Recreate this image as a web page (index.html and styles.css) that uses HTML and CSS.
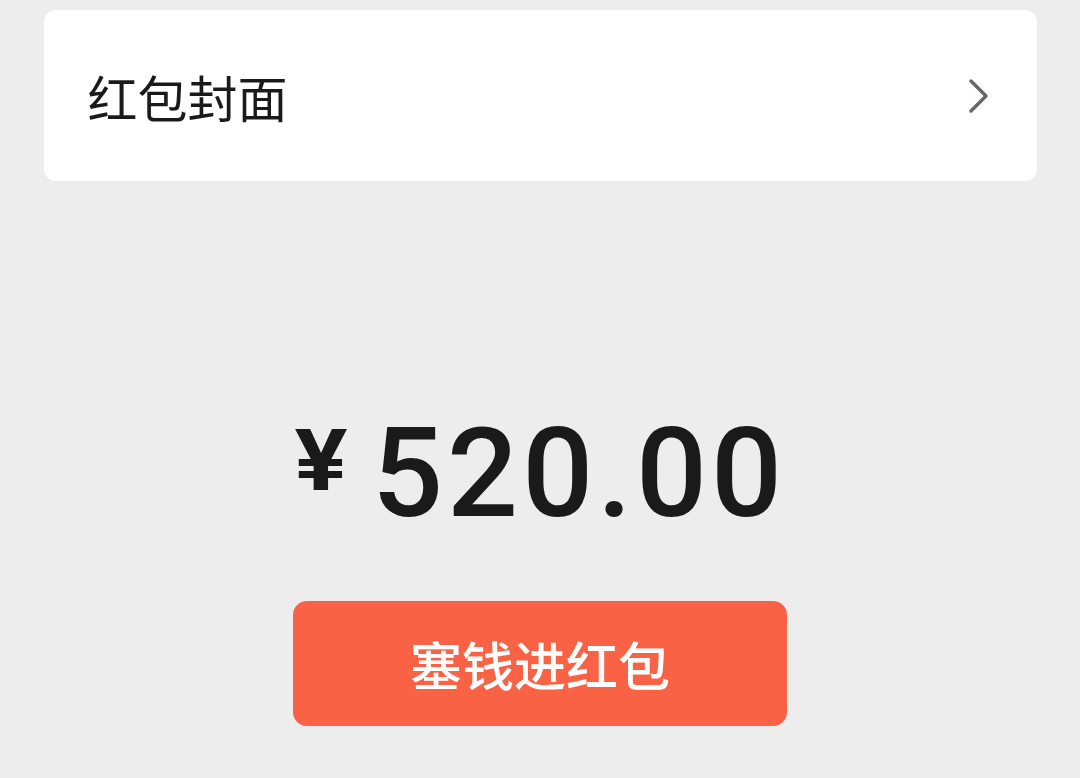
FILE: index.html
```html
<!DOCTYPE html>
<html lang="zh">
<head>
<meta charset="utf-8">
<link rel="stylesheet" href="styles.css">
</head>
<body>
<div class="page">
  <div class="card">
    <span class="card-label">红包封面</span>
    <svg class="chevron" width="24" height="36" viewBox="0 0 24 36"><path d="M4 3 L19 18 L4 33" fill="none" stroke="#666" stroke-width="3.4" stroke-linecap="round" stroke-linejoin="round"/></svg>
  </div>
  <div class="amount">
    <span class="yen">¥</span><span class="num">520.00</span>
  </div>
  <div class="btn">塞钱进红包</div>
</div>
</body>
</html>
```
FILE: styles.css
```css
html, body {
  margin: 0;
  padding: 0;
  background: #ededed;
  height: 100%;
}
.page {
  display: flex;
  flex-direction: column;
  align-items: center;
  padding-top: 10px;
  font-family: "Noto Sans CJK SC", "Noto Sans", sans-serif;
}
.card {
  box-sizing: border-box;
  width: 993px;
  height: 171px;
  background: #fff;
  border-radius: 12px;
  display: flex;
  align-items: center;
  justify-content: space-between;
  padding: 0 46px 0 44px;
}
.card-label {
  font-size: 50px;
  color: #1a1a1a;
}
.chevron {
  display: block;
}
.amount {
  margin-top: 233px;
  display: flex;
  align-items: flex-start;
  height: 120px;
}
.yen {
  font-family: "Roboto", "Liberation Sans", sans-serif;
  font-weight: 700;
  font-size: 86px;
  line-height: 86px;
  margin-top: 4px;
  color: #1a1a1a;
  margin-right: 28px;
  display: inline-block;
  transform: scaleX(1.15);
}
.num {
  font-family: "Roboto", "Liberation Sans", sans-serif;
  font-weight: 500;
  font-size: 125px;
  line-height: 120px;
  letter-spacing: 4px;
  margin-right: -4px;
  color: #1a1a1a;
}
.btn {
  margin-top: 67px;
  width: 494px;
  height: 125px;
  border-radius: 14px;
  background: #fa6246;
  color: #fff;
  font-size: 52px;
  font-weight: 500;
  display: flex;
  align-items: center;
  justify-content: center;
}
```
